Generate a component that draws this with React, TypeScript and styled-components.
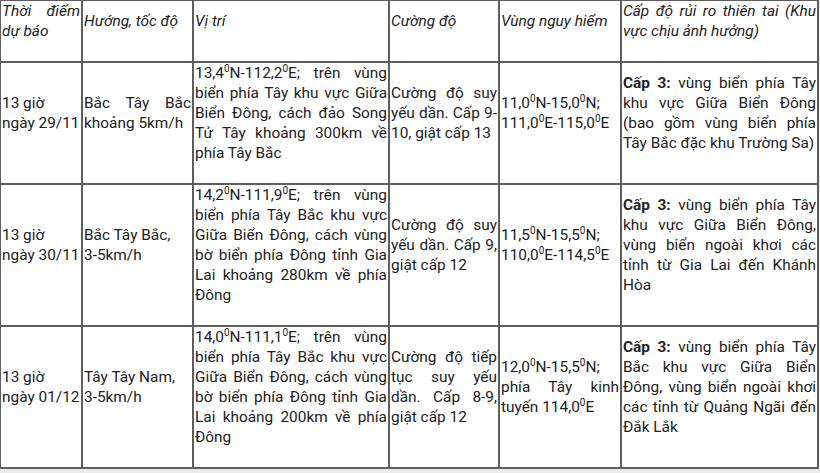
import * as React from 'react';
import styled, { createGlobalStyle } from 'styled-components';

const GlobalStyle = createGlobalStyle`
  body {
    margin: 0;
    background: #ebebeb;
    font-family: Roboto, 'Noto Sans', sans-serif;
    color: #222;
  }
`;

const Table = styled.table`
  border-collapse: collapse;
  table-layout: fixed;
  width: 818px;
  margin: -1px 0 0 -1px;
  background: #fff;
  font-size: 15.4px;
  line-height: 20px;
`;

const HeadCell = styled.th`
  border: 2px solid #5e5e5e;
  padding: 0 1px;
  vertical-align: middle;
  text-align: justify;
  font-weight: normal;
  font-style: italic;
`;

const Cell = styled.td`
  border: 2px solid #5e5e5e;
  padding: 0 1px;
  vertical-align: middle;
  text-align: justify;
`;

const Para = styled.p`
  margin: 0 0 20px;
`;

const Deg = styled.sup`
  font-size: 10px;
  line-height: 0;
  vertical-align: 6px;
`;

const Level = styled.strong`
  font-weight: bold;
`;

const D = () => <Deg>0</Deg>;

interface Row {
  time: React.ReactNode;
  dir: React.ReactNode;
  pos: React.ReactNode;
  power: React.ReactNode;
  zone: React.ReactNode;
  risk: React.ReactNode;
}

const rows: Row[] = [
  {
    time: (
      <>
        13 giờ
        <br />
        ngày 29/11
      </>
    ),
    dir: <>Bắc Tây Bắc khoảng 5km/h</>,
    pos: (
      <>
        13,4<D />N-112,2<D />E; trên vùng biển phía Tây khu vực Giữa Biển
        Đông, cách đảo Song Tử Tây khoảng 300km về phía Tây Bắc
      </>
    ),
    power: <>Cường độ suy yếu dần. Cấp 9-10, giật cấp 13</>,
    zone: (
      <>
        11,0<D />N-15,0<D />N; 111,0<D />E-115,0<D />E
      </>
    ),
    risk: (
      <>
        <Level>Cấp 3:</Level> vùng biển phía Tây khu vực Giữa Biển Đông (bao
        gồm vùng biển phía Tây Bắc đặc khu Trường Sa)
      </>
    ),
  },
  {
    time: (
      <>
        13 giờ
        <br />
        ngày 30/11
      </>
    ),
    dir: (
      <>
        Bắc Tây Bắc,
        <br />
        3-5km/h
      </>
    ),
    pos: (
      <>
        14,2<D />N-111,9<D />E; trên vùng biển phía Tây Bắc khu vực Giữa
        Biển Đông, cách vùng bờ biển phía Đông tỉnh Gia Lai khoảng 280km về
        phía Đông
      </>
    ),
    power: <>Cường độ suy yếu dần. Cấp 9, giật cấp 12</>,
    zone: (
      <>
        11,5<D />N-15,5<D />N; 110,0<D />E-114,5<D />E
      </>
    ),
    risk: (
      <>
        <Level>Cấp 3:</Level> vùng biển phía Tây khu vực Giữa Biển Đông,
        vùng biển ngoài khơi các tỉnh từ Gia Lai đến Khánh Hòa
      </>
    ),
  },
  {
    time: (
      <>
        13 giờ
        <br />
        ngày 01/12
      </>
    ),
    dir: (
      <>
        Tây Tây Nam,
        <br />
        3-5km/h
      </>
    ),
    pos: (
      <>
        14,0<D />N-111,1<D />E; trên vùng biển phía Tây Bắc khu vực Giữa
        Biển Đông, cách vùng bờ biển phía Đông tỉnh Gia Lai khoảng 200km về
        phía Đông
      </>
    ),
    power: <>Cường độ tiếp tục suy yếu dần. Cấp 8-9, giật cấp 12</>,
    zone: (
      <>
        12,0<D />N-15,5<D />N; phía Tây kinh tuyến 114,0<D />E
      </>
    ),
    risk: (
      <>
        <Level>Cấp 3:</Level> vùng biển phía Tây Bắc khu vực Giữa Biển
        Đông, vùng biển ngoài khơi các tỉnh từ Quảng Ngãi đến Đắk Lắk
      </>
    ),
  },
];

const widths = [82, 111, 196, 110, 122, 197];

const headers = [
  'Thời điểm dự báo',
  'Hướng, tốc độ',
  'Vị trí',
  'Cường độ',
  'Vùng nguy hiểm',
  'Cấp độ rủi ro thiên tai (Khu vực chịu ảnh hưởng)',
];

export default function App() {
  return (
    <>
      <GlobalStyle />
      <Table>
        <colgroup>
          {widths.map((w, i) => (
            <col key={i} style={{ width: w }} />
          ))}
        </colgroup>
        <thead>
          <tr>
            {headers.map((h) => (
              <HeadCell key={h}>
                <Para>{h}</Para>
              </HeadCell>
            ))}
          </tr>
        </thead>
        <tbody>
          {rows.map((r, i) => (
            <tr key={i}>
              <Cell>
                <Para>{r.time}</Para>
              </Cell>
              <Cell>
                <Para>{r.dir}</Para>
              </Cell>
              <Cell>
                <Para>{r.pos}</Para>
              </Cell>
              <Cell>
                <Para>{r.power}</Para>
              </Cell>
              <Cell>
                <Para>{r.zone}</Para>
              </Cell>
              <Cell>
                <Para>{r.risk}</Para>
              </Cell>
            </tr>
          ))}
        </tbody>
      </Table>
    </>
  );
}
